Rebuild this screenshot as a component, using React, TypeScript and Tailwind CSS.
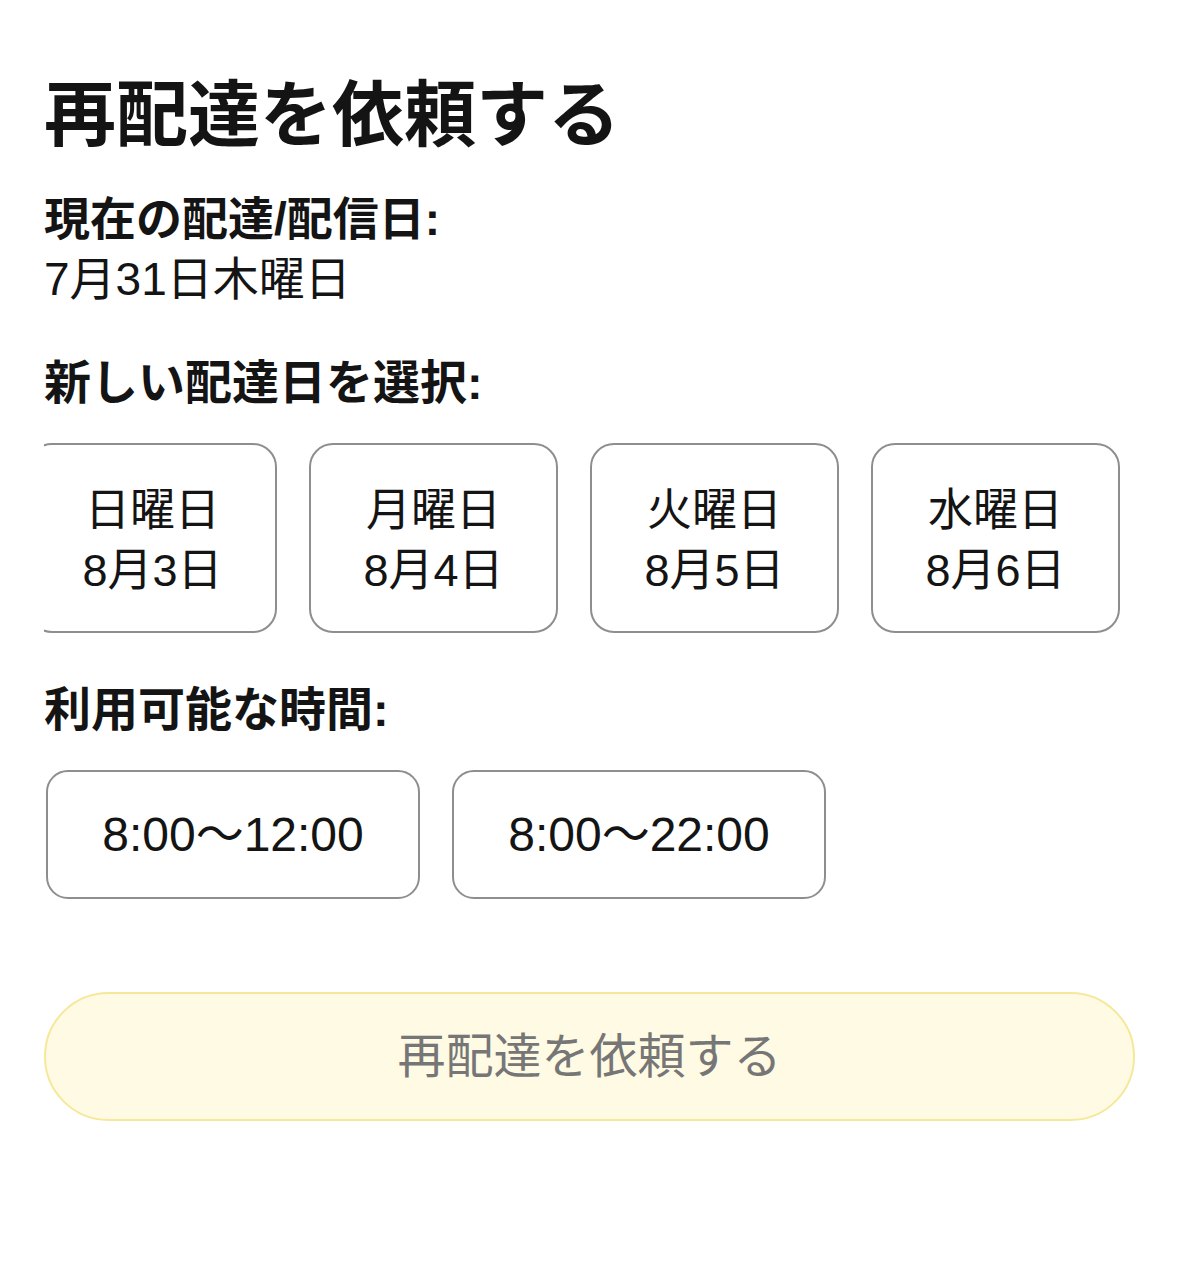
import { useState } from "react";

const days = [
  { day: "日曜日", date: "8月3日" },
  { day: "月曜日", date: "8月4日" },
  { day: "火曜日", date: "8月5日" },
  { day: "水曜日", date: "8月6日" },
];

const slots = ["8:00〜12:00", "8:00〜22:00"];

export default function App(): JSX.Element {
  const [picked, setPicked] = useState<string | null>(null);
  const [slot, setSlot] = useState<string | null>(null);

  return (
    <div
      className="min-h-screen bg-white px-[44px] text-[#141414]"
      style={{ fontFamily: '"Liberation Sans", "Noto Sans CJK JP", sans-serif' }}
    >
      <h1 className="pt-[73px] text-[72px] font-bold leading-[84px]">再配達を依頼する</h1>

      <p className="mt-[33px] text-[46px] font-bold leading-[58px]">現在の配達/配信日:</p>
      <p className="mt-[1px] text-[46px] leading-[60px]">7月31日木曜日</p>

      <p className="mt-[45px] text-[47px] font-bold leading-[58px]">新しい配達日を選択:</p>

      <div className="mt-[31px] overflow-hidden">
        <div className="ml-[-16px] flex gap-[32px]">
          {days.map((d) => (
            <button
              key={d.date}
              onClick={() => setPicked(d.date)}
              className={`flex h-[190px] w-[249px] shrink-0 flex-col items-center justify-center rounded-[24px] border-2 bg-white pt-[6px] text-[45px] leading-[60px] ${
                picked === d.date ? "border-[#141414]" : "border-[#8e8e8e]"
              }`}
            >
              <span>{d.day}</span>
              <span>{d.date}</span>
            </button>
          ))}
        </div>
      </div>

      <p className="mt-[48px] text-[47px] font-bold leading-[58px]">利用可能な時間:</p>

      <div className="mt-[31px] flex gap-[32px] pl-[2px]">
        {slots.map((s) => (
          <button
            key={s}
            onClick={() => setSlot(s)}
            className={`flex h-[129px] w-[374px] items-center justify-center rounded-[22px] border-2 bg-white text-[48px] ${
              slot === s ? "border-[#141414]" : "border-[#8e8e8e]"
            }`}
          >
            {s}
          </button>
        ))}
      </div>

      <button
        disabled={picked == null || slot == null}
        className="mt-[93px] flex h-[129px] w-full items-center justify-center rounded-full border-2 border-[#f6e89a] bg-[#fffae3] text-[48px] text-[#767676]"
      >
        再配達を依頼する
      </button>
    </div>
  );
}
